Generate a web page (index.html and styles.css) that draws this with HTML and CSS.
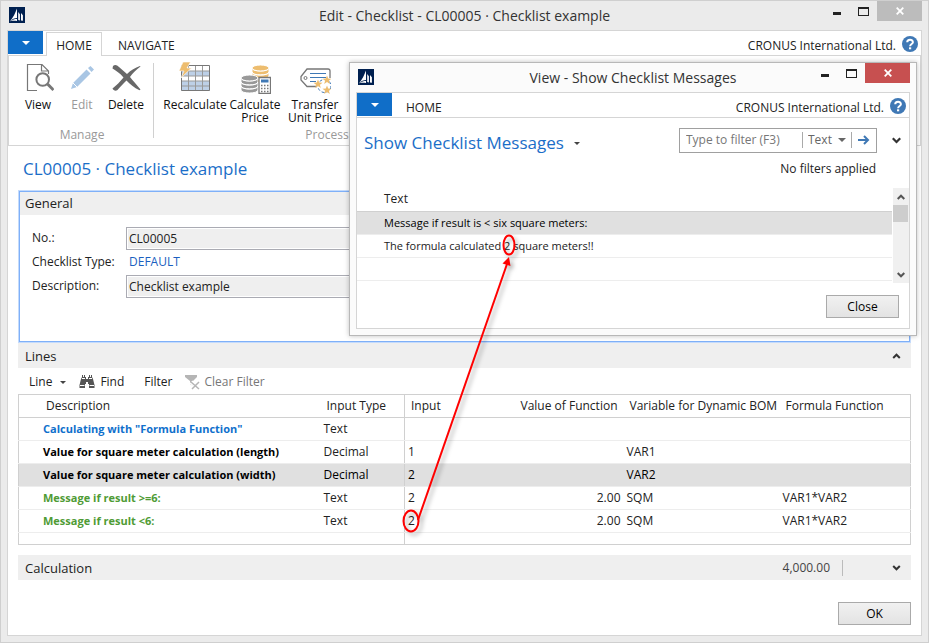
FILE: index.html
```html
<!DOCTYPE html>
<html lang="en">
<head>
<meta charset="utf-8">
<title>Edit - Checklist - CL00005 · Checklist example</title>
<link rel="stylesheet" href="styles.css">
</head>
<body>
<svg class="defs" aria-hidden="true">
  <symbol id="app" viewBox="0 0 16 16">
    <path fill="#002050" d="M0 0h16v16H0z"/>
    <path fill="#fff" d="M8 1.500v9.500C5.600 11.200 3.300 12 1 14 4.300 10.500 6.300 6 8 1.500zM9.200 5l1.700 2.200v6.300L9.200 13zM12 6l1.900 2.200v5.600L12 13.500zM1 14.200c2.500-1.900 5-2.300 7-2.300v2.100c-2.300-.4-4.500-.2-7 .2z"/>
  </symbol>
  <symbol id="help" viewBox="0 0 16 16">
    <circle cx="8" cy="8" r="8" fill="#3f78b5"/>
    <path fill="none" stroke="#fff" stroke-width="2" d="M5.200 6.300C5.200 2.900 10.900 2.900 10.900 6.200 10.900 8 8.100 8 8.100 10.200"/>
    <path fill="#fff" d="M7 11.300h2.200v2H7z"/>
  </symbol>
  <symbol id="close" viewBox="0 0 8 8"><path fill="none" stroke="#fff" stroke-width="1.800" d="M.7.7l6.600 6.600M7.300.7L.7 7.300"/></symbol>
  <symbol id="up" viewBox="0 0 8 6"><path fill="none" stroke="currentColor" stroke-width="2" d="M.7 5L4 1.700 7.300 5"/></symbol>
  <symbol id="down" viewBox="0 0 8 6"><path fill="none" stroke="currentColor" stroke-width="2" d="M.7 1L4 4.300 7.300 1"/></symbol>
  <symbol id="tri" viewBox="0 0 8 4"><path fill="currentColor" d="M0 0h8L4 4z"/></symbol>
</svg>

<main class="window">
  <header class="titlebar">
    <svg class="app-icon"><use href="#app"/></svg>
    <h1 class="caption">Edit - Checklist - CL00005 · Checklist example</h1>
    <div class="controls">
      <button class="minimize" aria-label="Minimize"></button>
      <button class="maximize" aria-label="Maximize"></button>
      <button class="close" aria-label="Close window"><svg><use href="#close"/></svg></button>
    </div>
  </header>

  <div class="client">
    <nav class="tabs">
      <button class="menu" aria-label="Application menu"><svg><use href="#tri"/></svg></button>
      <button class="tab active">HOME</button>
      <button class="tab">NAVIGATE</button>
      <span class="company">CRONUS International Ltd.</span>
      <button class="help" aria-label="Help"><svg><use href="#help"/></svg></button>
    </nav>

    <div class="ribbon">
      <section class="group manage">
        <div class="actions">
          <button class="action">
            <svg viewBox="0 0 32 32"><g fill="none" stroke="#777" stroke-width="1.200"><path d="M15 28.500H5.500v-26H20l6.500 6.500v3M19.500 2.500V9H26"/><path stroke-width="2" d="M27 17.500a6.300 6.300 0 1 1-12.600 0 6.300 6.300 0 0 1 12.600 0z"/><path stroke-width="3" d="M25.500 22l6 6"/></g></svg>
            <span>View</span>
          </button>
          <button class="action" disabled>
            <svg viewBox="0 0 32 32"><path fill="#a9c6e4" d="M5 27l2-6L20.500 7.500l4 4L11 25zM22 6l2.500-2 3.500 3.500-2.500 2.500z"/><path stroke="#fff" d="M7 21l4 4"/></svg>
            <span>Edit</span>
          </button>
          <button class="action">
            <svg viewBox="0 0 32 32"><path fill="#686868" d="M3 4C5 2 7 3 9 5l8 7c4-4 8-6 13-8l.5.600C26 8 23 11 20 15c3 4 7 8 10.500 12.500l-1 .800C24 26 20 22 16.500 18.500 13 22 10 25 7.500 28c-2 1.500-4 .5-5-1.500 4-3 7.500-7 11-11C10 11 6 9 2.500 6.500z"/></svg>
            <span>Delete</span>
          </button>
        </div>
        <h2 class="group-name">Manage</h2>
      </section>
      <section class="group process">
        <div class="actions">
          <button class="action wide">
            <svg viewBox="0 0 32 32"><path fill="#fff" d="M2.500 4h28v25h-28z"/><path fill="#bdd0e7" d="M2.500 9h28v5h-28zM2.500 19h28v10h-28z"/><path fill="none" stroke="#999" d="M2.500 9h28M2.500 14h28M2.500 19h28M2.500 24h28M9.500 4v25M16.500 4v25M23.500 4v25"/><path fill="none" stroke="#777" d="M2.500 3.500h28v25h-28z"/><path fill="#edbd6f" stroke="#fff" stroke-width=".600" d="M4 0h7.500L8 6h4.500L2 16l3-7H0z"/></svg>
            <span>Recalculate</span>
          </button>
          <button class="action">
            <svg viewBox="0 0 32 32"><g fill="#edbd6f" stroke="#fff"><path d="M13 14c0 4 17 4 17 0v4c0 4-17 4-17 0zM13 10c0 4 17 4 17 0v4c0 4-17 4-17 0zM13 6c0 4 17 4 17 0v4c0 4-17 4-17 0z"/><ellipse cx="21.500" cy="6" rx="8.500" ry="3"/></g><g fill="#999" stroke="#fff"><path d="M2 24c0 4 17 4 17 0v4c0 4-17 4-17 0zM2 20c0 4 17 4 17 0v4c0 4-17 4-17 0zM2 16c0 4 17 4 17 0v4c0 4-17 4-17 0z"/><ellipse cx="10.500" cy="16" rx="8.500" ry="3"/></g><path fill="#fff" stroke="#777" stroke-width="1.300" d="M20 15.500h11.500v16H20z"/><path fill="#3f78b5" d="M22 17.500h7.500v3H22z"/><path stroke="#777" stroke-width="1.500" stroke-dasharray="1.500 1.500" d="M22 23.500h8M22 26.500h8M22 29.500h8"/></svg>
            <span>Calculate Price</span>
          </button>
          <button class="action wide">
            <svg viewBox="0 0 32 32"><path fill="none" stroke="#777" stroke-width="1.300" d="M18 24.500H8L2 18v-3.500l6-7.500h21q2 0 2 2v7"/><circle cx="6.500" cy="16" r="1.500" fill="none" stroke="#777"/><path stroke="#3f78b5" stroke-width="1.200" d="M11 11.500h16M11 15.500h16M11 19.500h6"/><path fill="none" stroke="#3f78b5" stroke-dasharray="3 2" d="M25.500 17.500a6.500 6.500 0 1 1-.1 0"/><g fill="#edbd6f"><path id="star" d="M19 17.500l1.200 3 3.300.2-2.600 2 .9 3.200-2.800-1.800-2.800 1.800.9-3.200-2.600-2 3.300-.2z"/><use href="#star" x="9" y="-4"/><use href="#star" x="9" y="6"/></g></svg>
            <span>Transfer Unit Price</span>
          </button>
        </div>
        <h2 class="group-name">Process</h2>
      </section>
    </div>

    <div class="page">
      <h2 class="page-title">CL00005 · Checklist example</h2>

      <section class="general">
        <h3 class="bar">General</h3>
        <div class="fields">
          <label for="no">No.:</label><input id="no" value="CL00005" readonly>
          <span>Checklist Type:</span><a href="#type">DEFAULT</a>
          <label for="description">Description:</label><input id="description" value="Checklist example" readonly>
        </div>
      </section>

      <section>
        <h3 class="bar">Lines <svg class="chevron"><use href="#up"/></svg></h3>
        <div class="toolbar">
          <button class="tool line">Line <svg class="caret"><use href="#tri"/></svg></button>
          <button class="tool find"><svg class="tool-icon" viewBox="0 0 16 16"><path fill="#555" d="M3 1h3v2h1v2h2V3h1V1h3v2l1 2 1.500 6v3H10v-4H9V8H7v2H6v4H.5v-3L2 5l1-2z"/><path stroke="#fff" d="M3 4.500h3M10 4.500h3M1 11.500h4.500M10.500 11.500H15M4.500 1v2M11.500 1v2"/></svg>Find</button>
          <button class="tool filter">Filter</button>
          <button class="tool clear" disabled><svg class="tool-icon" viewBox="0 0 16 16"><path fill="#b5b5b5" d="M1 1h12v2L9 7v5l-3-2V7L1 3z"/><path stroke="#fff" stroke-width="4" d="M7 8l8 7M15 8l-7 7"/><path stroke="#b5b5b5" stroke-width="1.500" d="M7 8l8 7M15 8l-7 7"/></svg>Clear Filter</button>
        </div>
        <table class="lines">
          <colgroup><col class="c-desc"><col class="c-type"><col class="c-input"><col class="c-value"><col class="c-var"><col></colgroup>
          <thead>
            <tr><th>Description</th><th>Input Type</th><th>Input</th><th class="num">Value of Function</th><th>Variable for Dynamic BOM</th><th>Formula Function</th></tr>
          </thead>
          <tbody>
            <tr><td class="heading">Calculating with "Formula Function"</td><td>Text</td><td></td><td></td><td></td><td></td></tr>
            <tr><td class="strong">Value for square meter calculation (length)</td><td>Decimal</td><td>1</td><td></td><td>VAR1</td><td></td></tr>
            <tr class="selected"><td class="strong">Value for square meter calculation (width)</td><td>Decimal</td><td>2</td><td></td><td>VAR2</td><td></td></tr>
            <tr><td class="message">Message if result &gt;=6:</td><td>Text</td><td>2</td><td class="num">2.00</td><td>SQM</td><td>VAR1*VAR2</td></tr>
            <tr><td class="message">Message if result &lt;6:</td><td>Text</td><td>2</td><td class="num">2.00</td><td>SQM</td><td>VAR1*VAR2</td></tr>
            <tr class="rest"><td></td><td></td><td></td><td></td><td></td><td></td></tr>
          </tbody>
        </table>
      </section>

      <section class="calculation">
        <h3 class="bar">Calculation <span class="total">4,000.00</span><svg class="chevron"><use href="#down"/></svg></h3>
      </section>

      <footer class="footer"><button class="push">OK</button></footer>
    </div>
  </div>

  <section class="dialog" role="dialog" aria-labelledby="dialog-caption">
    <header class="titlebar">
      <svg class="app-icon"><use href="#app"/></svg>
      <h2 class="caption" id="dialog-caption">View - Show Checklist Messages</h2>
      <div class="controls">
        <button class="minimize" aria-label="Minimize"></button>
        <button class="maximize" aria-label="Maximize"></button>
        <button class="close" aria-label="Close dialog"><svg><use href="#close"/></svg></button>
      </div>
    </header>
    <div class="client">
      <nav class="tabs">
        <button class="menu" aria-label="Dialog menu"><svg><use href="#tri"/></svg></button>
        <button class="tab">HOME</button>
        <span class="company">CRONUS International Ltd.</span>
        <button class="help" aria-label="Help"><svg><use href="#help"/></svg></button>
      </nav>
      <div class="heading-row">
        <h3 class="page-title">Show Checklist Messages <svg class="caret"><use href="#tri"/></svg></h3>
        <div class="filter-box">
          <input type="text" placeholder="Type to filter (F3)" aria-label="Filter text">
          <div class="field">
            <select aria-label="Filter field"><option>Text</option></select>
            <svg><use href="#tri"/></svg>
          </div>
          <button class="go" aria-label="Apply filter"><svg viewBox="0 0 12 10"><path fill="none" stroke="#3f78b5" stroke-width="2" d="M0 5h10M6 1l4 4-4 4"/></svg></button>
        </div>
        <button class="expand" aria-label="Expand filter"><svg><use href="#down"/></svg></button>
      </div>
      <p class="filter-state">No filters applied</p>
      <div class="list">
        <table class="messages">
          <thead><tr><th>Text</th></tr></thead>
          <tbody>
            <tr class="selected"><td>Message if result is &lt; six square meters:</td></tr>
            <tr><td>The formula calculated 2 square meters!!</td></tr>
            <tr><td></td></tr>
          </tbody>
        </table>
        <div class="scrollbar"><svg><use href="#up"/></svg><div class="thumb"></div><svg class="end"><use href="#down"/></svg></div>
      </div>
      <footer class="footer"><button class="push">Close</button></footer>
    </div>
  </section>

  <svg class="annotation" viewBox="0 0 130 310" aria-hidden="true">
    <g class="shadow" fill="none" stroke="#f00" stroke-width="2">
      <ellipse cx="11" cy="289" rx="7.500" ry="10.500"/>
      <ellipse cx="109" cy="13" rx="5.500" ry="9.500"/>
      <path d="M18 288L107 32"/>
      <path fill="#f00" stroke="none" d="M109 25l1.500 9-8-2.500z"/>
    </g>
  </svg>
</main>
</body>
</html>
```
FILE: styles.css
```css
* { box-sizing: border-box; }

body {
  margin: 0;
  font: 12px/16px "Open Sans", "Noto Sans", sans-serif;
  color: #222;
}

h1, h2, h3, p { margin: 0; font-weight: normal; }

button, input, select {
  margin: 0;
  padding: 0;
  border: 0;
  background: none;
  font: inherit;
  color: inherit;
}

svg { display: block; flex: none; }
.defs { position: absolute; width: 0; height: 0; }

/* Window frame */
.window {
  position: relative;
  display: flex;
  flex-direction: column;
  min-height: 100vh;
  padding: 0 6px 6px;
  border: 1px solid #cfcfcf;
  background: #ebebeb;
}
.client {
  flex: 1;
  display: flex;
  flex-direction: column;
  border: 1px solid #d5d5d5;
  background: #fff;
}
.titlebar {
  display: grid;
  grid-template-columns: 1fr auto 1fr;
  height: 29px;
}
.app-icon { width: 16px; height: 16px; margin: 6px 2px; }
.caption { font-size: 14px; line-height: 29px; color: #333; }
.controls {
  display: flex;
  justify-content: flex-end;
  align-items: flex-start;
}
.minimize { width: 8px; height: 3px; margin: 11px 17px 0 0; background: #222; }
.maximize { width: 11px; height: 9px; margin: 6px 8px 0 0; border: 1px solid #222; border-top-width: 2px; }
.close { width: 45px; height: 20px; display: grid; place-items: center; background: #bcbcbc; }
.close svg { width: 8px; height: 8px; }

/* Tabs */
.tabs {
  display: flex;
  align-items: flex-end;
  height: 25px;
  border-bottom: 1px solid #d5d5d5;
}
.menu {
  width: 35px;
  height: 23px;
  margin-bottom: 1px;
  display: grid;
  place-items: center;
  background: #106ec8;
  color: #fff;
}
.menu svg { width: 8px; height: 4px; }
.tab { height: 23px; padding: 4px 15px 0; color: #222; }
.tab.active {
  width: 56px;
  height: 24px;
  margin: 0 1px -1px 3px;
  padding: 2px 0 0;
  border: 1px solid #d5d5d5;
  border-bottom: 0;
  background: #fff;
}
.company { margin-left: auto; line-height: 19px; }
.help { margin: 0 3px 3px 6px; }
.help svg { width: 16px; height: 16px; }

/* Ribbon */
.ribbon {
  display: flex;
  height: 90px;
  border: 1px solid #d5d5d5;
  border-top: 0;
}
.group {
  display: flex;
  flex-direction: column;
  justify-content: space-between;
  padding: 6px 0 2px;
}
.manage { width: 144px; padding-left: 7px; padding-right: 5px; }
.process { width: 346px; padding-left: 10px; padding-right: 8px; position: relative; }
.process::before {
  content: "";
  position: absolute;
  left: 0;
  top: 7px;
  bottom: 7px;
  width: 1px;
  background: #d0d0d0;
}
.actions { display: flex; align-items: flex-start; }
.action {
  width: 44px;
  display: flex;
  flex-direction: column;
  align-items: center;
  gap: 4px;
  line-height: 13px;
  color: #111;
}
.action svg { width: 32px; height: 32px; }
.action:disabled { color: #999; }
.process .action { width: 56px; }
.process .action.wide { width: 64px; }
.group-name { font-size: 12px; color: #999; text-align: center; }

/* Page */
.page { flex: 1; display: flex; flex-direction: column; padding: 10px; }
.page-title { font-size: 17px; line-height: 26px; color: #1b6ec8; }
.page > .page-title { padding-left: 5px; }
.bar {
  display: flex;
  align-items: center;
  height: 25px;
  padding: 0 10px 0 7px;
  background: #efefef;
  font-size: 13px;
}
.chevron { width: 9px; height: 6px; margin-left: auto; color: #333; }
.general {
  height: 153px;
  margin-top: 8px;
  border: 1px solid #c4dbfc;
  outline: 1px solid #7fb0f8;
  outline-offset: -2px;
}
.general .bar { height: 24px; padding-left: 6px; }
.fields {
  display: grid;
  grid-template-columns: 94px 1fr;
  grid-auto-rows: 24px;
  align-items: center;
  width: 60%;
  padding: 11px 0 0 13px;
}
.fields input {
  height: 23px;
  padding: 0 2px;
  border: 1px solid #aaabb3;
  background: #efefef;
  box-shadow: inset 0 0 0 1px #fff;
}
.fields a { padding-left: 3px; color: #1b5fc0; text-decoration: none; }

.toolbar { display: flex; height: 26px; padding: 2px 0 0 11px; }
.tool { display: flex; align-items: center; gap: 5px; color: #222; }
.tool:disabled { color: #777; }
.tool-icon { width: 16px; height: 16px; }
.caret { width: 6px; height: 3px; color: #444; }
.line { gap: 8px; }
.find { margin-left: 13px; }
.filter { margin-left: 20px; }
.clear { margin-left: 11px; }

/* Tables */
table { width: 100%; border-collapse: collapse; table-layout: fixed; }
th, td { height: 23px; padding: 0 3px; text-align: left; white-space: nowrap; border-bottom: 1px solid #ededed; }
th { padding: 0 6px; font-weight: normal; border-bottom-color: #d0d0d0; }
.num { text-align: right; }
.selected { background: #e0e0e0; color: #000; }
.lines { border: 1px solid #d0d0d0; }
.c-desc { width: 302px; }
.c-type { width: 84px; }
.c-input { width: 60px; }
.c-value { width: 159px; }
.c-var { width: 156px; }
.lines th:first-child { padding-left: 27px; }
.lines td:first-child { padding-left: 24px; font-size: 11px; font-weight: bold; }
.lines th:nth-child(2), .lines td:nth-child(2) { border-right: 1px solid #d0d0d0; }
.heading { color: #1070cc; }
.strong { color: #000; }
.message { color: #4f9b35; }
.rest td { height: 12px; border-bottom: 0; }

.calculation { margin-top: 10px; }
.total { margin-left: auto; padding-right: 12px; border-right: 1px solid #bbb; font-size: 12px; color: #444; }
.total + .chevron { margin-left: 49px; }
.footer { display: flex; justify-content: flex-end; margin-top: auto; }
.push {
  width: 73px;
  height: 23px;
  border: 1px solid #aaa;
  background: linear-gradient(#f1f1f1, #e3e3e3);
  color: #000;
}

/* Dialog */
.dialog {
  position: absolute;
  top: 61px;
  left: 348px;
  right: 11px;
  display: flex;
  flex-direction: column;
  padding: 0 6px 6px;
  border: 1px solid #b8b8b8;
  background: #fbfbfb;
  box-shadow: 0 0 5px rgba(0, 0, 0, 0.25);
}
.dialog .close { background: #c75050; }
.dialog .tab { padding: 4px 14px 0; }
.heading-row { display: flex; align-items: center; height: 26px; margin: 9px 8px 0 7px; }
.heading-row .page-title { display: flex; align-items: center; gap: 10px; padding-top: 6px; }
.filter-box {
  display: flex;
  align-items: center;
  width: 198px;
  height: 25px;
  margin-left: auto;
  border: 1px solid #a0a0a0;
  color: #666;
}
.filter-box input { flex: 1; min-width: 0; padding-left: 6px; }
.filter-box input::placeholder { color: #777; opacity: 1; }
.field { display: flex; align-items: center; gap: 4px; padding: 0 5px; border-left: 1px solid #aaa; border-right: 1px solid #aaa; }
.field select { width: 26px; appearance: none; }
.field svg { width: 8px; height: 4px; }
.go { padding: 0 6px; }
.go svg { width: 12px; height: 10px; }
.expand { margin-left: 15px; color: #333; }
.expand svg { width: 9px; height: 7px; }
.filter-state { margin: 8px 33px 0 0; text-align: right; }
.list { display: flex; align-items: flex-start; margin-top: 11px; }
.messages { flex: 1; margin-right: 1px; }
.messages th { padding-left: 27px; }
.messages td { padding-left: 27px; font-size: 11px; }
.scrollbar { display: flex; flex-direction: column; width: 16px; height: 95px; padding: 6px 0 5px; background: #f0f0f0; color: #555; }
.scrollbar svg { width: 8px; height: 6px; margin: 0 auto; }
.scrollbar .end { margin-top: auto; }
.thumb { height: 17px; margin: 5px 1px 0 0; background: #cdcdcd; }
.dialog .footer { padding: 12px 10px 10px; }

.annotation {
  position: absolute;
  top: 231px;
  left: 399px;
  width: 130px;
  height: 310px;
  pointer-events: none;
}
.shadow { filter: drop-shadow(3px 3px 2px rgba(0, 0, 0, 0.3)); }
```
